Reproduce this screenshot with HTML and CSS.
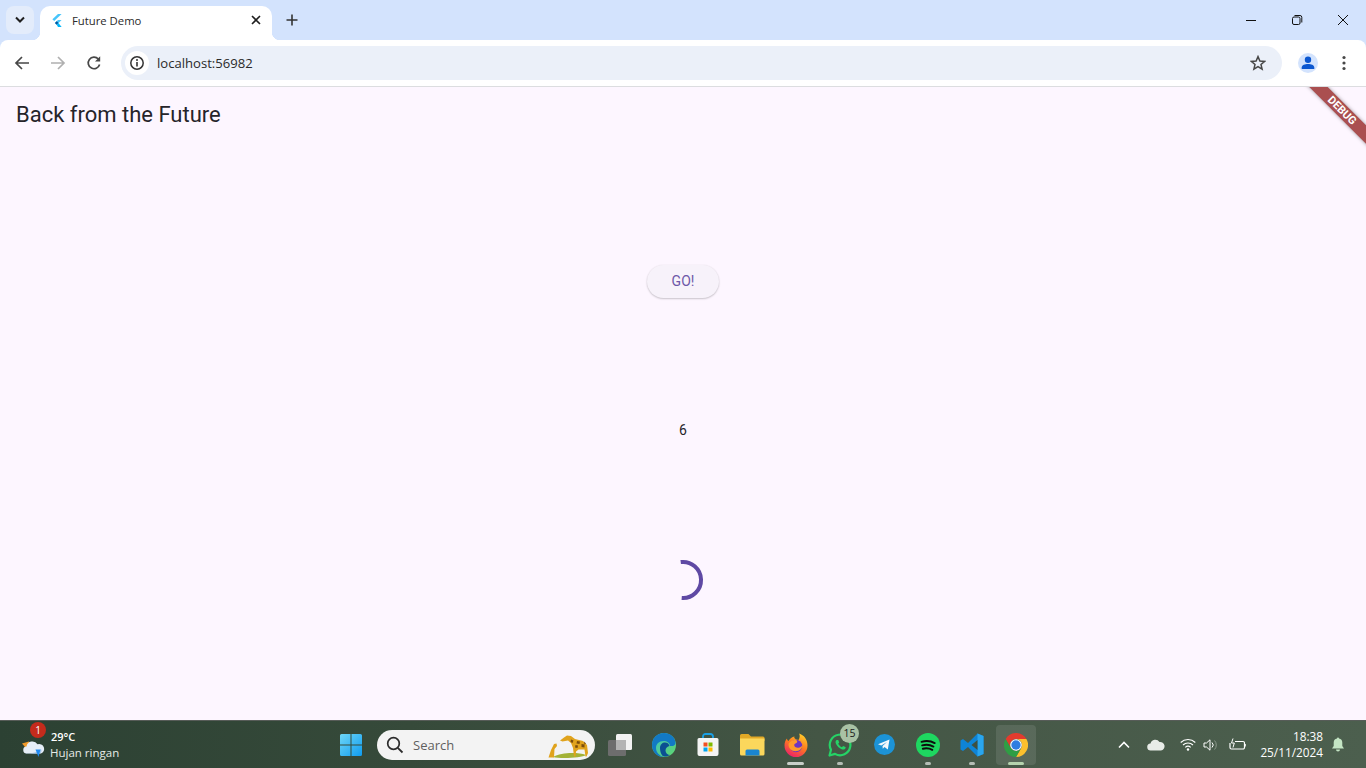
FILE: index.html
```html
<!DOCTYPE html>
<html lang="en">
<head>
<meta charset="utf-8">
<title>Future Demo</title>
<link rel="stylesheet" href="styles.css">
</head>
<body>
<header class="tabstrip">
  <button class="tab-search"><svg width="12" height="8" viewBox="0 0 12 8"><path d="M2 1.5 6 5.5 10 1.5" fill="none" stroke="#1f1f1f" stroke-width="2"/></svg></button>
  <div class="tab">
    <svg class="tab-logo" width="11" height="13" viewBox="0 0 11 13"><path d="M7 0h3.6L3.2 6.9 1.4 5.2z" fill="#47c5fb"/><path d="M10.6 6H7L3.9 9l1.8 1.8z" fill="#47c5fb"/><path d="M3.9 9 5.7 7.2 7.5 9 5.7 10.8z" fill="#00569e"/><path d="M5.7 10.8 7.5 9 10.6 13H7z" fill="#00b5f8"/></svg>
    <span class="tab-title">Future Demo</span>
    <svg class="tab-close" width="10" height="10" viewBox="0 0 10 10"><path d="M1 1 9 9M9 1 1 9" stroke="#1f1f1f" stroke-width="1.6"/></svg>
  </div>
  <svg class="new-tab" width="12" height="12" viewBox="0 0 12 12"><path d="M6 .5v11M.5 6h11" stroke="#333" stroke-width="1.6"/></svg>
  <div class="window-controls">
    <span class="win-btn"><svg width="12" height="12" viewBox="0 0 12 12"><path d="M1 6.5h10" stroke="#111" stroke-width="1"/></svg></span>
    <span class="win-btn"><svg width="12" height="12" viewBox="0 0 12 12"><rect x="1.5" y="3" width="7.5" height="7.5" rx="1.5" fill="none" stroke="#111"/><path d="M3.5 1.5H9A1.8 1.8 0 0 1 10.8 3.3V8.5" fill="none" stroke="#111"/></svg></span>
    <span class="win-btn"><svg width="12" height="12" viewBox="0 0 12 12"><path d="M1 1 11 11M11 1 1 11" stroke="#111" stroke-width="1"/></svg></span>
  </div>
</header>

<nav class="toolbar">
  <span class="nav-btn"><svg width="16" height="16" viewBox="0 0 16 16"><path d="M15 8H2M8 2 2 8l6 6" fill="none" stroke="#474747" stroke-width="1.7"/></svg></span>
  <span class="nav-btn"><svg width="16" height="16" viewBox="0 0 16 16"><path d="M1 8h13M8 2l6 6-6 6" fill="none" stroke="#b0b0b0" stroke-width="1.7"/></svg></span>
  <span class="nav-btn"><svg width="16" height="16" viewBox="0 0 16 16"><path d="M13.6 9.5A5.8 5.8 0 1 1 12.3 4" fill="none" stroke="#474747" stroke-width="1.7"/><path d="M14.2 1.2v5.2H9z" fill="#474747"/></svg></span>
  <div class="omnibox">
    <span class="info"><svg width="16" height="16" viewBox="0 0 16 16"><circle cx="8" cy="8" r="6.2" fill="none" stroke="#333" stroke-width="1.5"/><path d="M8 7v4.4" stroke="#333" stroke-width="1.6"/><circle cx="8" cy="4.9" r="1" fill="#333"/></svg></span>
    <span class="url">localhost:56982</span>
    <svg class="star" width="16" height="16" viewBox="0 0 16 16"><path d="M8 1.6 9.9 6l4.7.4-3.6 3.1 1.1 4.7L8 11.7l-4.100 2.500 1.100-4.700L1.400 6.400 6.100 6z" fill="none" stroke="#474747" stroke-width="1.5"/></svg>
  </div>
  <span class="nav-btn profile-btn"><span class="avatar"><svg width="16" height="16" viewBox="0 0 16 16"><circle cx="8" cy="4.800" r="3.200" fill="#0b57d0"/><path d="M1.700 14v-1.600C1.700 10 5 8.900 8 8.900s6.300 1.100 6.300 3.500V14z" fill="#0b57d0"/></svg></span></span>
  <span class="nav-btn"><svg width="4" height="16" viewBox="0 0 4 16"><circle cx="2" cy="2.500" r="1.600" fill="#474747"/><circle cx="2" cy="8" r="1.600" fill="#474747"/><circle cx="2" cy="13.500" r="1.600" fill="#474747"/></svg></span>
</nav>

<main class="page">
  <h1 class="app-title">Back from the Future</h1>
  <div class="content">
    <button class="go-btn">GO!</button>
    <p class="result">6</p>
    <svg class="spinner" width="44" height="44" viewBox="0 0 44 44"><path d="M19.700 4.100A18 18 0 1 1 20.700 39.900" fill="none" stroke="#5f49a4" stroke-width="4"/></svg>
  </div>
  <div class="debug-ribbon">DEBUG</div>
</main>

<footer class="taskbar">
  <div class="weather">
    <span class="weather-icon">
      <svg width="26" height="22" viewBox="0 0 26 22"><path d="M1 8.500 8 6.500 9 12.500 4 12z" fill="#f09a2a"/><path d="M6 18.500a3.500 3.500 0 0 1-.5-7 6 6 0 0 1 11-2.200 4.600 4.600 0 0 1 3.500 9.200z" fill="#e6eef7"/><path d="M6 18.500a3.500 3.500 0 0 1-1.500-.6c4 .6 12 .3 15.500-4 1 2 .5 4.600-2 4.600z" fill="#a8c6e8"/><path d="M14.500 14.500h5L17.500 22z" fill="#1f8af0"/></svg>
      <span class="weather-badge">1</span>
    </span>
    <div class="weather-text"><span class="temp">29°C</span><span class="cond">Hujan ringan</span></div>
  </div>

  <div class="task-icons">
    <span class="task-btn"><svg width="24" height="24" viewBox="0 0 24 24"><defs><linearGradient id="win" x1="0" y1="0" x2="1" y2="1"><stop offset="0" stop-color="#6fd6f6"/><stop offset="1" stop-color="#0f9cf0"/></linearGradient></defs><path d="M1 2.500A1.500 1.500 0 0 1 2.500 1h9v10.500H1zM12.500 1h9A1.500 1.500 0 0 1 23 2.500v9H12.500zM1 12.500h10.500V23h-9A1.500 1.500 0 0 1 1 21.500zM12.500 12.500H23v9a1.500 1.500 0 0 1-1.500 1.500h-9z" fill="url(#win)"/></svg></span>

    <div class="search">
      <svg width="18" height="18" viewBox="0 0 18 18"><circle cx="7.500" cy="7.500" r="5.800" fill="none" stroke="#2b2b2b" stroke-width="1.700"/><path d="M11.800 11.800 16.500 16.500" stroke="#2b2b2b" stroke-width="1.800"/></svg>
      <span class="search-label">Search</span>
      <svg class="giraffe" width="44" height="28" viewBox="0 0 44 28"><path d="M6 26c8-4.500 24-5 33-2-4 3-26 4-33 2z" fill="#a3b236"/><path d="M13 9.500 17 6.500 20 4.500 24 5 28 8 36 10 40 14 41 22 39.500 25.500H38.500L37.500 18.500 31.500 18.500 29 20.500 28.500 25.500H27L26 17 24 12 21 9.500 15.500 10.500z" fill="#e0a31c"/><path d="M1.500 26.500 4 19 7 13 9.500 12.500 10 15 7.500 18 7 26.500z" fill="#e0a31c"/><path d="M24 8.500l2.500 1-1 2.500-2-1zM30 10l3 .5-.5 2.500-3-.5zM34.500 13l3 .5v3l-3-.5zM28.500 14l2.500.5-.5 2.500-2.500-.5zM37 10.500l2 2-1.500 1z" fill="#7a4d0c"/></svg>
    </div>

    <span class="task-btn task-view"><svg width="24" height="22" viewBox="0 0 24 22"><rect x="8" y="0" width="16" height="16" rx="1.500" fill="#f2f2f2"/><rect x="0" y="6" width="18" height="16" rx="1.500" fill="#6d6d6d"/><rect x="8" y="6" width="10" height="10" fill="#b3b3b3"/></svg></span>

    <span class="task-btn"><svg width="24" height="24" viewBox="0 0 24 24"><defs><linearGradient id="edgeA" x1="0" y1="0" x2="1" y2="1"><stop offset="0" stop-color="#3ec0c6"/><stop offset="1" stop-color="#5fd66d"/></linearGradient></defs><circle cx="12" cy="12" r="12" fill="url(#edgeA)"/><path d="M0 12C0 5 5 0 12 0c6 0 11 4 11.500 9.500.2 3-3 4-5.500 3.500 0-3-3-5-6.500-5C7 8 4 11 4 15c0 4 3 7.500 7.500 9C5 24 0 18.500 0 12z" fill="#1279c4"/><path d="M8 15c0-3.500 2.500-5.500 5-5.500 2 0 4 1 4.500 3.500-2 .5-4 2-4 4.500s2 4.500 5 4.500c-1.700.8-3.500 1.500-6 1.500-3 0-4.500-5-4.500-8.500z" fill="#0b4f92"/></svg></span>

    <span class="task-btn"><svg width="24" height="24" viewBox="0 0 24 24"><path d="M7 6V3.500A2.500 2.500 0 0 1 9.500 1h5A2.500 2.500 0 0 1 17 3.500V6" fill="none" stroke="#1aa0e6" stroke-width="1.800"/><path d="M1.500 6.500A1.500 1.500 0 0 1 3 5h18a1.500 1.500 0 0 1 1.500 1.500V21a2 2 0 0 1-2 2h-17a2 2 0 0 1-2-2z" fill="#f4f4f4"/><rect x="7.500" y="9.500" width="4" height="4" fill="#f25022"/><rect x="12.500" y="9.500" width="4" height="4" fill="#7fba00"/><rect x="7.500" y="14.500" width="4" height="4" fill="#00a4ef"/><rect x="12.500" y="14.500" width="4" height="4" fill="#ffb900"/></svg></span>

    <span class="task-btn"><svg width="25" height="22" viewBox="0 0 25 22"><path d="M0 1.500A1.500 1.500 0 0 1 1.500 0h7l2.500 2.500h12A1.500 1.500 0 0 1 24.500 4v3H0z" fill="#e0a826"/><path d="M0 4.500h24.500V20a1.500 1.500 0 0 1-1.500 1.500H1.500A1.500 1.500 0 0 1 0 20z" fill="#fbd75c"/><path d="M7 15.500h11a1.500 1.500 0 0 1 1.500 1.500v4.500h-14V17A1.500 1.500 0 0 1 7 15.500z" fill="#1a86d0"/></svg></span>

    <span class="task-btn"><svg width="24" height="24" viewBox="0 0 24 24"><defs><linearGradient id="fox" x1=".8" y1="0" x2=".3" y2="1"><stop offset="0" stop-color="#ffd02a"/><stop offset=".5" stop-color="#ff7a20"/><stop offset="1" stop-color="#ec1f6a"/></linearGradient></defs><path d="M12 24A11.500 11.500 0 0 1 .5 12.500C.5 9.500 1.500 7 3 5.500c0 1 .5 2 1.500 2.500C6 5.500 8 4 10.500 3.500c-1 2 1.500 3 4 3.500C16 5 16 2 15 .5c5 1.500 8.500 6 8.500 12A11.500 11.500 0 0 1 12 24z" fill="url(#fox)"/><circle cx="12" cy="13" r="6.200" fill="#6f35c0"/><path d="M5 10c2-2.500 4.500-3.500 7-3 1.200.3 1.500 1.500 1 2.500-.7 1-2.500 1-2.800 2.200-.2 2 2 3.300 4.300 3 1.500-.2 3-1 4-2.500-.3 3-3 6-7 6-4 0-7-3-7-6.500 0-.6.200-1.200.500-1.700z" fill="#ff9a2a"/></svg><i class="indicator wide"></i></span>

    <span class="task-btn"><svg width="24" height="24" viewBox="0 0 24 24"><path d="M1.500 22.500 3 16.800A10.300 10.300 0 1 1 7 20.900z" fill="none" stroke="#25d366" stroke-width="2.200" stroke-linejoin="round"/><path d="M8.600 7c-1.200.9-1.400 2.600-.4 4.300 1.200 2.300 3 4 5.400 5 1.700.7 3.300.2 3.900-1.100.2-.5.200-.9 0-1.100l-2.400-1.200-1.200 1.400c-1.500-.6-3-2-3.700-3.500l1-1.300-1-2.500z" fill="#25d366"/></svg><span class="count-badge">15</span><i class="indicator"></i></span>

    <span class="task-btn"><svg width="21" height="21" viewBox="0 0 21 21"><circle cx="10.500" cy="10.500" r="10.500" fill="#1c93d6"/><path d="M4 10.300 15.500 5.500 13.800 15.500 10.500 13 8.800 14.800 8.500 12 13 8 7.300 11.400z" fill="#f3f8fc"/></svg></span>

    <span class="task-btn"><svg width="24" height="24" viewBox="0 0 24 24"><circle cx="12" cy="12" r="12" fill="#1ed760"/><path d="M5.500 8.800c4.500-1.200 9.500-.8 13.200 1.300M6.200 12.400c3.800-1 8-.6 11.200 1.200M6.800 15.700c3.200-.7 6.700-.4 9.500 1.100" fill="none" stroke="#0d0d0d" stroke-width="1.900" stroke-linecap="round"/></svg><i class="indicator"></i></span>

    <span class="task-btn"><svg width="24" height="24" viewBox="0 0 24 24"><path d="M17.500 0.500 23.500 3v18l-6 2.500L8 14l-5 4-2.500-1.500v-9L3 6l5 4z" fill="#0e84d6"/><path d="M17.500.5 23.500 3v18l-6 2.500z" fill="#2aa6ee"/><path d="M17.500 7 11.500 12l6 5z" fill="#3e5040"/></svg><i class="indicator"></i></span>

    <span class="task-btn active"><svg width="24" height="24" viewBox="0 0 24 24"><path d="M1.600 6A12 12 0 0 1 22.400 6H12A6 6 0 0 0 6.800 15z" fill="#e33b2e"/><path d="M22.400 6A12 12 0 0 1 12 24L17.200 15A6 6 0 0 0 12 6z" fill="#fbc02d"/><path d="M12 24A12 12 0 0 1 1.600 6L6.800 15A6 6 0 0 0 17.200 15z" fill="#2f9e44"/><circle cx="12" cy="12" r="5.800" fill="#fff"/><circle cx="12" cy="12" r="4.700" fill="#2f7de1"/></svg><i class="indicator chrome"></i></span>
  </div>

  <div class="tray">
    <svg class="tray-chev" width="12" height="8" viewBox="0 0 12 8"><path d="M1 6.500 6 1.500l5 5" fill="none" stroke="#fff" stroke-width="1.600"/></svg>
    <svg class="tray-cloud" width="18" height="12" viewBox="0 0 18 12"><path d="M4 11.500a3.500 3.500 0 0 1-.5-7A5 5 0 0 1 12.500 3a4.300 4.300 0 0 1 1.500 8.500z" fill="#e8ece8"/></svg>
    <svg class="tray-wifi" width="16" height="13" viewBox="0 0 16 13"><path d="M.7 4.500a10.500 10.500 0 0 1 14.600 0M3 7a7.200 7.200 0 0 1 10 0M5.300 9.400a4 4 0 0 1 5.400 0" fill="none" stroke="#fff" stroke-width="1.100"/><circle cx="8" cy="11.500" r="1.200" fill="#fff"/></svg>
    <svg class="tray-vol" width="16" height="14" viewBox="0 0 16 14"><path d="M1 5h2.500L7 1.800v10.400L3.500 9H1z" fill="none" stroke="#fff"/><path d="M9 4.500a3.500 3.500 0 0 1 0 5" fill="none" stroke="#fff"/><path d="M11.500 2.500a6.500 6.500 0 0 1 0 9" fill="none" stroke="#8b988b"/></svg>
    <svg class="tray-bat" width="17" height="14" viewBox="0 0 17 14"><path d="M6 3.500h8a1.500 1.500 0 0 1 1.500 1.500v4.500a1.500 1.500 0 0 1-1.500 1.500H2.500A1.500 1.500 0 0 1 1 9.500V5" fill="none" stroke="#fff" stroke-width="1.200"/><path d="M16.300 6v2.500" stroke="#fff"/><path d="M4 .5 2.500 5h2.800L4 9.500" fill="none" stroke="#fff"/></svg>
    <div class="clock"><span>18:38</span><span>25/11/2024</span></div>
    <svg class="tray-bell" width="14" height="15" viewBox="0 0 14 15"><path d="M7 .5a1 1 0 0 1 1 1A4.200 4.200 0 0 1 11.300 5.500V9l1.700 2.600H1L2.700 9V5.500A4.200 4.200 0 0 1 6 1.500a1 1 0 0 1 1-1z" fill="#c4e5c4"/><path d="M5 12.600h4a2 2 0 0 1-4 0z" fill="#c4e5c4"/></svg>
  </div>
</footer>
</body>
</html>
```

FILE: styles.css
```css
* { box-sizing: border-box; }

html, body {
  margin: 0;
  height: 100%;
  overflow: hidden;
}

body {
  display: flex;
  flex-direction: column;
  width: 1366px;
  height: 768px;
  background: #d3e3fd;
  font-family: "Open Sans", "Noto Sans", sans-serif;
}

button {
  border: 0;
  font: inherit;
  padding: 0;
}

/* Tab strip */
.tabstrip {
  display: flex;
  align-items: flex-start;
  height: 40px;
  flex: none;
  padding: 6px 0 0 6px;
  background: #d3e3fd;
}

.tab-search {
  display: flex;
  align-items: center;
  justify-content: center;
  width: 28px;
  height: 28px;
  border-radius: 8px;
  background: #e3ecfb;
}

.tab {
  position: relative;
  display: flex;
  align-items: center;
  width: 232px;
  height: 34px;
  margin-left: 6px;
  padding: 0 11px 6px;
  background: #fff;
  border-radius: 10px 10px 0 0;
}

.tab::before,
.tab::after {
  content: "";
  position: absolute;
  bottom: 0;
  width: 8px;
  height: 8px;
}

.tab::before {
  left: -8px;
  background: radial-gradient(circle at 0 0, transparent 8px, #fff 8.5px);
}

.tab::after {
  right: -8px;
  background: radial-gradient(circle at 100% 0, transparent 8px, #fff 8.5px);
}

.tab-logo { margin-right: 10px; }

.tab-title {
  flex: 1;
  font-size: 11.3px;
  color: #2a2a2a;
}

.new-tab { margin: 8px 0 0 14px; }

.window-controls {
  display: flex;
  margin-left: auto;
  margin-top: -6px;
}

.win-btn {
  display: flex;
  align-items: center;
  justify-content: center;
  width: 46px;
  height: 40px;
}

/* Toolbar */
.toolbar {
  display: flex;
  align-items: center;
  flex: none;
  height: 47px;
  padding: 0 4px;
  background: #fff;
  border-bottom: 1px solid #dcdde0;
  border-radius: 8px 8px 0 0;
}

.nav-btn {
  display: flex;
  align-items: center;
  justify-content: center;
  width: 36px;
  height: 34px;
  flex: none;
}

.omnibox {
  display: flex;
  align-items: center;
  flex: 1;
  height: 34px;
  margin: 0 8px 0 9px;
  padding: 0 16px 0 4px;
  border-radius: 17px;
  background: #ebf0f9;
}

.info {
  display: flex;
  align-items: center;
  justify-content: center;
  width: 24px;
  height: 24px;
  border-radius: 50%;
  background: #fff;
}

.url {
  flex: 1;
  margin-left: 8px;
  font-size: 13.1px;
  color: #2a2a2a;
}

.avatar {
  display: flex;
  align-items: center;
  justify-content: center;
  width: 20px;
  height: 20px;
  border-radius: 50%;
  background: #d3e3fd;
}

/* Flutter page */
.page {
  position: relative;
  flex: 1;
  overflow: hidden;
  background: #fdf6ff;
  font-family: Roboto, sans-serif;
}

.app-title {
  margin: 0;
  padding: 14px 16px 0;
  font-size: 22px;
  font-weight: 400;
  line-height: 28px;
  color: #26242a;
}

.content {
  display: flex;
  flex-direction: column;
  align-items: center;
  padding-top: 136px;
}

.go-btn {
  width: 72px;
  height: 33px;
  padding-bottom: 1px;
  border-radius: 17px;
  background: #f7f2fa;
  color: #6d58a8;
  font-family: Roboto, sans-serif;
  font-size: 14px;
  box-shadow: 0 1px 2px rgba(0, 0, 0, .2), 0 0 2px rgba(0, 0, 0, .06);
}

.result {
  margin: 122px 0 0;
  font-size: 14px;
  line-height: 20px;
  color: #26242a;
}

.spinner { margin-top: 118px; }

.debug-ribbon {
  position: absolute;
  top: 17px;
  right: -36px;
  width: 120px;
  height: 13px;
  background: #aa4f50;
  box-shadow: 0 0 4px rgba(0, 0, 0, .4);
  color: #fff;
  font-size: 11px;
  font-weight: 700;
  line-height: 13px;
  text-align: center;
  transform: rotate(45deg);
}

/* Taskbar */
.taskbar {
  display: flex;
  align-items: center;
  flex: none;
  height: 48px;
  border-top: 1px solid #575c58;
  background: linear-gradient(90deg, #2c4133 0%, #364a3a 30%, #445645 60%, #4c5f4e 100%);
  color: #fff;
}

.weather {
  display: flex;
  align-items: center;
  width: 329px;
  flex: none;
  padding-left: 21px;
}

.weather-icon {
  position: relative;
  width: 29px;
  height: 22px;
  margin-top: 3px;
}

.weather-badge {
  position: absolute;
  top: -13px;
  left: 9px;
  width: 16px;
  height: 16px;
  border-radius: 50%;
  background: #c42b1c;
  font-size: 10px;
  line-height: 16px;
  text-align: center;
}

.weather-text {
  display: flex;
  flex-direction: column;
  font-size: 11.5px;
  line-height: 16px;
}

.temp {
  padding-left: 1px;
  font-size: 11px;
  font-weight: 600;
}

.cond { color: #e6ebe6; }

.task-icons {
  display: flex;
  align-items: center;
  height: 100%;
}

.task-btn {
  position: relative;
  display: flex;
  align-items: center;
  justify-content: center;
  width: 44px;
  height: 40px;
  flex: none;
}

.task-btn.active {
  width: 40px;
  margin-left: 2px;
  border-radius: 4px;
  background: rgba(255, 255, 255, .1);
}

.search {
  display: flex;
  align-items: center;
  width: 218px;
  height: 30px;
  margin: 0 3px 0 4px;
  padding-left: 9px;
  border-radius: 15px;
  background: #f3f3f3;
}

.search-label {
  flex: 1;
  margin-left: 9px;
  font-size: 13px;
  color: #5f5f5f;
}

.giraffe { margin-right: 4px; }

.indicator {
  position: absolute;
  left: 50%;
  bottom: 0;
  width: 6px;
  height: 3px;
  margin-left: -3px;
  border-radius: 2px;
  background: #b5bdb5;
}

.indicator.wide {
  width: 17px;
  margin-left: -9px;
  background: #c9cfc9;
}

.indicator.chrome {
  width: 16px;
  margin-left: -8px;
  background: #b5d3ae;
}

.count-badge {
  position: absolute;
  top: -1px;
  left: 22px;
  width: 19px;
  height: 19px;
  border-radius: 50%;
  background: #a9c2a5;
  color: #1b1b1b;
  font-size: 10.5px;
  line-height: 19px;
  text-align: center;
}

.tray {
  display: flex;
  align-items: center;
  flex: 1;
  padding-left: 82px;
}

.tray-cloud { margin-left: 17px; }
.tray-wifi { margin-left: 15px; }
.tray-vol { margin-left: 7px; }
.tray-bat { margin-left: 10px; }

.clock {
  display: flex;
  flex-direction: column;
  align-items: flex-end;
  width: 77px;
  padding-bottom: 2px;
  font-size: 11.8px;
  line-height: 16px;
}

.tray-bell { margin-left: 8px; }
```
